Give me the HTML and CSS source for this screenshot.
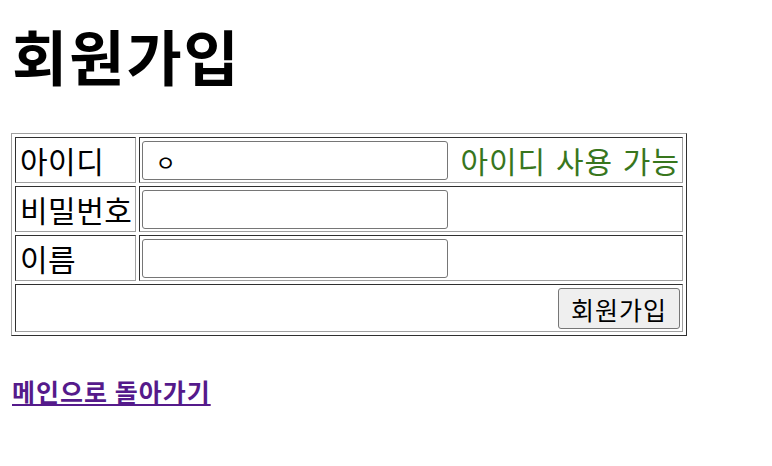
FILE: index.html
```html
<!DOCTYPE HTML>
<html>
<head>
    <meta charset="utf-8" />
    <title>회원가입</title>
    <link rel="stylesheet" href="styles.css">
</head>
<body>

<h1 class="page-title">회원가입</h1>

<form class="join-form" action="#" method="post">
    <table class="join-table">
        <tr>
            <td class="label">아이디</td>
            <td class="field">
                <div class="field-row">
                    <input type="text" name="id" class="text-input" value="ㅇ" />
                    <span class="id-msg">아이디 사용 가능</span>
                </div>
            </td>
        </tr>
        <tr>
            <td class="label">비밀번호</td>
            <td class="field">
                <div class="field-row"><input type="password" name="pw" class="text-input" /></div>
            </td>
        </tr>
        <tr>
            <td class="label">이름</td>
            <td class="field">
                <div class="field-row"><input type="text" name="name" class="text-input" /></div>
            </td>
        </tr>
        <tr>
            <td colspan="2" class="submit-cell">
                <div class="submit-row">
                    <button type="submit" class="submit-btn">회원가입</button>
                </div>
            </td>
        </tr>
    </table>
</form>

<h3 class="back-link"><a href="#">메인으로 돌아가기</a></h3>

</body>
</html>
```

FILE: styles.css
```css
body {
    margin: 0;
    padding: 0 11px;
    font-family: "Noto Sans CJK KR", "Noto Sans", sans-serif;
    color: #000;
    background: #fff;
}
.page-title {
    font-size: 60px;
    font-weight: bold;
    letter-spacing: 2px;
    line-height: 72px;
    margin: 19px 0 42px 1px;
}
.join-form {
    margin: 0;
}
.join-table {
    border: 1px solid;
    border-color: #a0a0a0 #303030 #303030 #a0a0a0;
    border-spacing: 3px;
}
.join-table td {
    border: 1px solid;
    border-color: #303030 #a0a0a0 #a0a0a0 #303030;
    padding: 3px 2px 2px;
    font-size: 30px;
    letter-spacing: 0.5px;
    line-height: 39px;
}
.join-table td.label {
    padding: 3px 3px 2px 4px;
}
.field-row {
    display: flex;
    align-items: center;
    height: 39px;
}
.text-input {
    box-sizing: border-box;
    width: 306px;
    height: 39px;
    border: 1px solid #767676;
    border-radius: 3px;
    padding: 2px 12px;
    font-family: inherit;
    font-size: 22px;
}
.id-msg {
    color: #38761d;
    margin-left: 12px;
    word-spacing: 2px;
    letter-spacing: 1px;
}
.submit-row {
    display: flex;
    justify-content: flex-end;
    height: 41px;
}
.submit-btn {
    box-sizing: border-box;
    height: 41px;
    padding: 0 12px;
    font-family: inherit;
    font-size: 25px;
    letter-spacing: 1px;
    background: #efefef;
    border: 1px solid #767676;
    border-radius: 3px;
}
.back-link {
    font-size: 25px;
    letter-spacing: 1px;
    margin: 37px 0 0 1px;
}
.back-link a {
    color: #551a8b;
}
```
